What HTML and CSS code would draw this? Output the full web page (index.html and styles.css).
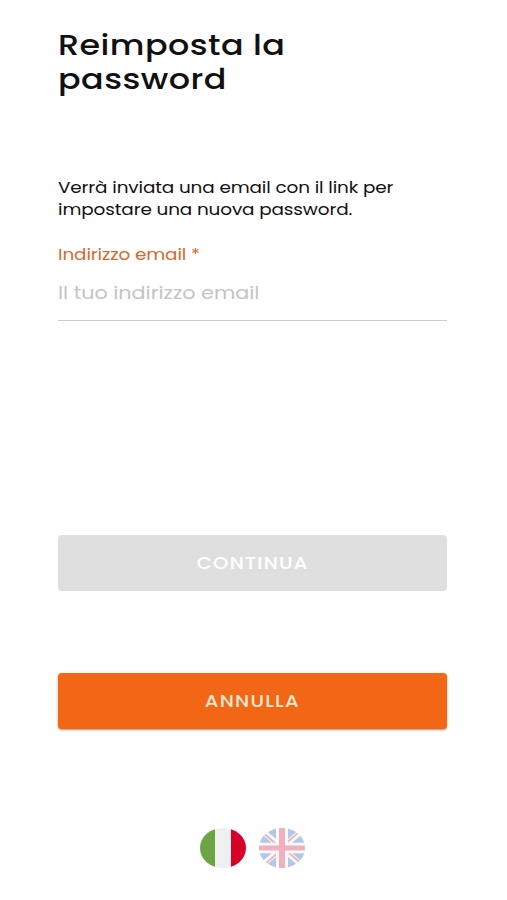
FILE: index.html
```html
<!DOCTYPE html>
<html lang="it">
  <head>
    <meta charset="utf-8">
    <meta name="viewport" content="width=device-width, initial-scale=1">
    <title>Reimposta la password</title>
    <link rel="stylesheet" href="styles.css">
  </head>
  <body>
    <form class="reset-form">
      <h1 class="title"><span class="wide">Reimposta la<br>password</span></h1>
      <p class="intro"><span class="wide">Verrà inviata una email con il link per<br>impostare una nuova password.</span></p>
      <label class="label" for="email"><span class="wide">Indirizzo email *</span></label>
      <div class="field">
        <input class="input wide" id="email" type="email" placeholder="Il tuo indirizzo email">
      </div>
      <button class="button button-disabled" type="submit" disabled><span class="button-text">CONTINUA</span></button>
      <button class="button button-cancel" type="button"><span class="button-text">ANNULLA</span></button>
    </form>
    <div class="languages">
      <svg class="flag" viewBox="0 0 46 40" preserveAspectRatio="none">
        <clipPath id="round-it"><ellipse cx="23" cy="20" rx="23" ry="20" /></clipPath>
        <g clip-path="url(#round-it)">
          <rect width="46" height="40" fill="#f0f0f0" />
          <rect width="15" height="40" fill="#6da544" />
          <rect x="31" width="15" height="40" fill="#d80027" />
        </g>
      </svg>
      <svg class="flag flag-off" viewBox="0 0 512 512" preserveAspectRatio="none">
        <circle cx="256" cy="256" r="256" fill="#f0f0f0" />
        <g fill="#0052b4">
          <path d="M52.9 100.1C32.8 126.300 17.700 156.400 8.800 189.200h133.200z" />
          <path d="M503.200 189.200c-8.900-32.800-24-62.900-44.100-89.100L370 189.200z" />
          <path d="M8.800 322.800c8.900 32.800 24 62.900 44.100 89.100l89.100-89.100z" />
          <path d="M411.900 52.900C385.700 32.800 355.600 17.700 322.800 8.800V142z" />
          <path d="M100.100 459.100c26.200 20.100 56.300 35.200 89.100 44.100V370z" />
          <path d="M189.200 8.800c-32.800 8.900-62.900 24-89.100 44.100l89.100 89.100z" />
          <path d="M322.800 503.200c32.800-8.900 62.900-24 89.100-44.100L322.800 370z" />
          <path d="M370 322.800l89.100 89.100c20.100-26.200 35.200-56.300 44.100-89.100z" />
        </g>
        <g fill="#d80027">
          <path d="M509.800 222.600H289.400V2.200a258 258 0 0 0-66.800 0v220.400H2.200a258 258 0 0 0 0 66.800h220.400v220.400a258 258 0 0 0 66.800 0V289.400h220.400a258 258 0 0 0 0-66.800z" />
          <path d="M322.800 322.800L437 437a256 256 0 0 0 15-16.400l-97.800-97.800z" />
          <path d="M189.200 322.800L75 437a256 256 0 0 0 16.400 15l97.800-97.700z" />
          <path d="M189.200 189.200L75 75a256 256 0 0 0-15 16.400l97.700 97.800z" />
          <path d="M322.800 189.200L437 75a256 256 0 0 0-16.400-15l-97.800 97.700z" />
        </g>
      </svg>
    </div>
  </body>
</html>
```

FILE: styles.css
```css
* {
  box-sizing: border-box;
}
body {
  margin: 0;
  padding: 28px 60px 0 58px;
  background-color: #fefefe;
  color: #111;
  font-family: Poppins, Inter, "Open Sans", sans-serif;
  font-feature-settings: "cv11", "ss03";
}
.reset-form {
  display: flex;
  flex-direction: column;
}
.wide {
  display: inline-block;
  white-space: nowrap;
  vertical-align: top;
  transform: scaleX(1.15);
  transform-origin: left center;
}
.title {
  margin: 0;
  font-size: 29px;
  line-height: 34px;
  font-weight: 500;
  letter-spacing: 0.4px;
}
.intro {
  margin: 81px 0 0;
  font-size: 16px;
  line-height: 22px;
  letter-spacing: -0.1px;
}
.label {
  margin-top: 23px;
  color: #d66a2b;
  font-size: 16px;
  line-height: 22px;
  letter-spacing: -0.1px;
}
.field {
  height: 55px;
  border-bottom: 1px solid #ccc;
}
.input {
  width: 330px;
  height: 55px;
  padding: 0 0 2px;
  border: 0;
  outline: none;
  background: transparent;
  font-family: inherit;
  font-size: 18px;
  font-feature-settings: inherit;
}
.input::placeholder {
  color: #c4c4c4;
}
.button {
  height: 56px;
  padding: 0;
  border: 0;
  border-radius: 4px;
  color: #fff;
  font-family: inherit;
  font-size: 17px;
  font-weight: 500;
  letter-spacing: 1.1px;
}
.button-text {
  display: inline-block;
  transform: scaleX(1.15);
}
.button-disabled {
  margin-top: 214px;
  background-color: #dfdfdf;
}
.button-cancel {
  margin-top: 82px;
  background-color: #f26716;
  color: #ffe9d0;
  box-shadow: 0 1px 2px rgba(160, 60, 20, 0.6);
}
.languages {
  display: flex;
  justify-content: center;
  gap: 13px;
  margin-top: 99px;
}
.flag {
  width: 46px;
  height: 40px;
}
.flag-off {
  opacity: 0.3;
}
```
